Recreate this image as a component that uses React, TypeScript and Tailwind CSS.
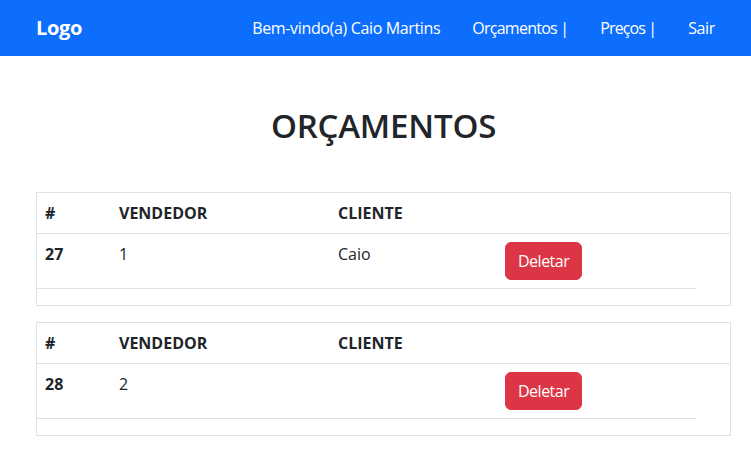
const orcamentos = [
  { id: 27, vendedor: '1', cliente: 'Caio' },
  { id: 28, vendedor: '2', cliente: '' },
];

function OrcamentoCard({ id, vendedor, cliente }: { id: number; vendedor: string; cliente: string }) {
  return (
    <div className="border border-[#dee2e6]">
      <div className="flex border-b border-[#dee2e6] font-bold leading-6">
        <div className="w-[74px] p-2">#</div>
        <div className="w-[219px] p-2">VENDEDOR</div>
        <div className="w-[167px] p-2">CLIENTE</div>
      </div>
      <div className="flex w-[659px] border-b border-[#dee2e6] leading-6">
        <div className="w-[74px] p-2 font-bold">{id}</div>
        <div className="w-[219px] p-2">{vendedor}</div>
        <div className="w-[167px] p-2">{cliente}</div>
        <div className="p-2">
          <button className="rounded-[6px] border border-[#dc3545] bg-[#dc3545] px-3 py-1.5 leading-6 tracking-[-0.5px] text-white">
            Deletar
          </button>
        </div>
      </div>
      <div className="h-4" />
    </div>
  );
}

export default function App() {
  return (
    <div className="min-h-screen bg-white text-[16px] text-[#212529] font-['Open_Sans',sans-serif]">
      <nav className="flex h-14 items-center justify-between bg-[#0d6efd] pl-[36px] pr-[36px] text-white">
        <span className="text-[20px] font-bold tracking-[-0.3px]">Logo</span>
        <div className="flex gap-8 tracking-[-0.35px]">
          <span>Bem-vindo(a) Caio Martins</span>
          <span className="tracking-[-0.75px]">Orçamentos |</span>
          <span className="tracking-[-0.9px]">Preços |</span>
          <span>Sair</span>
        </div>
      </nav>
      <div className="pl-[36px] pr-[20px]">
        <h1 className="pt-[50px] pb-[46px] text-center text-[33px] font-semibold leading-[40px] tracking-[-0.2px]">
          ORÇAMENTOS
        </h1>
        <div className="flex flex-col gap-4">
          {orcamentos.map((o) => (
            <OrcamentoCard key={o.id} {...o} />
          ))}
        </div>
      </div>
    </div>
  );
}
